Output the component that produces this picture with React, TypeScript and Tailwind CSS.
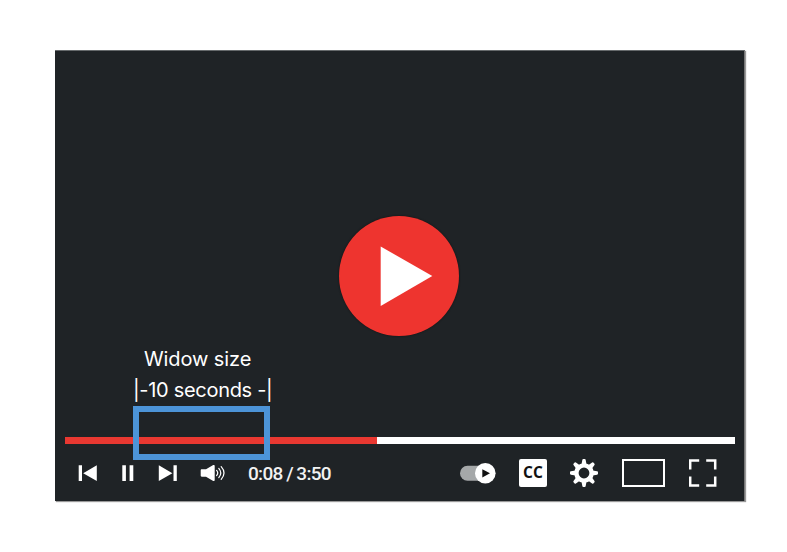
import React from "react";

function PreviousIcon() {
  return (
    <svg className="h-4 w-[19px]" viewBox="0 0 19 16" fill="#fff">
      <path d="M0.7 0.3H4v16H0.7zM18.8 0.3v15.700L5.2 8.200z" />
    </svg>
  );
}

function PauseIcon() {
  return (
    <svg className="ml-[25px] h-4 w-3" viewBox="0 0 12 16" fill="#fff">
      <path d="M0.3 0.3h3.6v15.700H0.3zM7.6 0.3h3.7v15.700H7.6z" />
    </svg>
  );
}

function NextIcon() {
  return (
    <svg className="ml-6 h-4 w-[19px]" viewBox="0 0 19 16" fill="#fff">
      <path d="M0.8 0.3v15.700L14.4 8.200zM15.5 0.3h3.3v15.700h-3.3z" />
    </svg>
  );
}

function VolumeIcon() {
  return (
    <svg className="ml-[23px] h-5 w-[26px]" viewBox="0 0 26 20" fill="none">
      <path d="M1.8 6.2H6L12.800 2.200C13.800 1.700 14.700 2 14.700 3v14c0 1-.9 1.300-1.900.8L6 13.800H1.800C1 13.800.7 13.300.7 12.600V7.400C.7 6.700 1 6.200 1.800 6.200z" fill="#fff" />
      <path d="M16.600 7.400q2.300 2.600 0 5.200M18.800 5.400q4 4.600 0 9.200M21.200 3.700q5.600 6.300 0 12.600" stroke="#fff" strokeWidth="1.200" strokeLinecap="round" />
    </svg>
  );
}

function AutoplayToggle() {
  return (
    <svg className="ml-auto h-[22px] w-9" viewBox="0 0 36 22">
      <rect x="0" y="3.800" width="30" height="15" rx="7.500" fill="#a5a8a9" />
      <circle cx="25.300" cy="11.300" r="10.300" fill="#fff" />
      <path d="M22.300 7.200v8.200L30 11.300z" fill="#111" />
    </svg>
  );
}

function GearIcon() {
  return (
    <svg className="ml-[23px] h-7 w-7" viewBox="-14 -14 28 28" fill="#fff">
      {[0, 45, 90, 135, 180, 225, 270, 315].map((angle) => (
        <path key={angle} d="M-2.500 -8.500L-1.700 -13.100Q-1.500 -14 -.8 -14H.8Q1.500 -14 1.700 -13.100L2.500 -8.500z" transform={`rotate(${angle})`} />
      ))}
      <circle r="7.600" fill="none" stroke="#fff" strokeWidth="4.400" />
    </svg>
  );
}

function FullscreenIcon() {
  return (
    <svg className="ml-6 h-7 w-7" viewBox="0 0 28 28" fill="none" stroke="#fff" strokeWidth="2.500">
      <path d="M1.200 10.500V1.500H10.200M17.200 1.500H26.200V10.500M26.200 17.500V26.500H17.200M10.200 26.500H1.200V17.500" />
    </svg>
  );
}

export default function App() {
  return (
    <main className="h-[552px] w-[787px] overflow-hidden bg-white pt-[50px] pl-[55px]">
      <section className="relative flex h-[451px] w-[690px] flex-col border-t border-r border-t-[#666a6c] border-r-[#777] bg-[#1f2326] shadow-[1px_1px_1px_#999]">
        <button aria-label="Play" className="mt-[165px] ml-[284px] h-[120px] w-[120px] shrink-0 rounded-full bg-[#ee342f] shadow-[0_0_2px_#111]">
          <svg viewBox="0 0 120 120" fill="#fff">
            <path d="M41.700 30.500v59.500L93.300 60z" />
          </svg>
        </button>
        <div className="mt-[101px] ml-[10px] flex h-[6.500px] w-[670px] shrink-0">
          <div className="w-[312px] bg-[#e93831]" />
          <div className="flex-1 bg-white" />
        </div>
        <div className="mt-[15.500px] flex h-7 items-center pr-[27px] pl-[23px]">
          <PreviousIcon />
          <PauseIcon />
          <NextIcon />
          <VolumeIcon />
          <span className="ml-[22px] whitespace-nowrap pt-px font-['Roboto',sans-serif] text-[19px] leading-7 font-medium tracking-[-0.7px] [word-spacing:-0.5px] text-[#f2f2f2]">0:08 / 3:50</span>
          <AutoplayToggle />
          <div className="ml-[23px] flex h-7 w-7 items-center justify-center rounded-[2px] bg-white font-['Open_Sans',sans-serif] text-[15.500px] font-bold text-[#111]">CC</div>
          <GearIcon />
          <div className="ml-6 h-7 w-[43px] border-2 border-white" />
          <FullscreenIcon />
        </div>
        <div className="absolute top-[293px] left-[78px] font-['Inter',sans-serif] text-[20px] leading-[31px] whitespace-nowrap text-white">
          <div className="pl-[11px] tracking-[-0.1px]">Widow size</div>
          <div className="tracking-[-0.3px]">|-10 seconds -|</div>
          <div className="h-[54px] w-[137px] border-[6px] border-[#4c94d8]" />
        </div>
      </section>
    </main>
  );
}
